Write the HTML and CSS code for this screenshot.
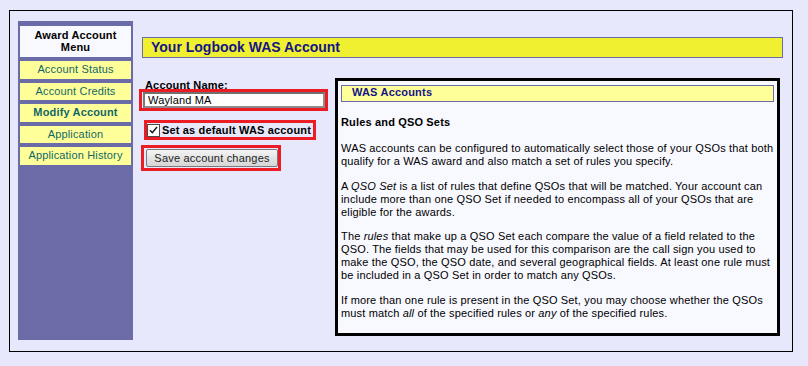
FILE: index.html
```html
<!DOCTYPE html>
<html>
<head>
<meta charset="utf-8">
<link rel="stylesheet" href="styles.css">
</head>
<body>
<div class="frame">
  <nav class="sidebar">
    <div class="menu-head">Award Account<br>Menu</div>
    <a class="menu-item">Account Status</a>
    <a class="menu-item">Account Credits</a>
    <a class="menu-item current">Modify Account</a>
    <a class="menu-item">Application</a>
    <a class="menu-item">Application History</a>
  </nav>
  <main class="main">
    <h1 class="title">Your Logbook WAS Account</h1>
    <div class="row">
      <form class="form">
        <label class="field-label">Account Name:</label>
        <div class="hl hl-input"><input class="text-input" type="text" value="Wayland MA"></div>
        <div class="hl hl-check">
          <svg class="checkbox" width="13" height="13" viewBox="0 0 13 13"><rect x="0.5" y="0.5" width="12" height="12" fill="#fff" stroke="#4a4a4a"/><path d="M3 6.3 L5.3 8.8 L10 3" fill="none" stroke="#111" stroke-width="1.4"/></svg>
          <span class="check-label">Set as default WAS account</span>
        </div>
        <div class="hl hl-button"><button class="btn" type="button">Save account changes</button></div>
      </form>
      <section class="info">
        <div class="info-head">WAS Accounts</div>
        <h2 class="info-title">Rules and QSO Sets</h2>
        <p>WAS accounts can be configured to automatically select those of your QSOs that both<br>qualify for a WAS award and also match a set of rules you specify.</p>
        <p>A <i>QSO Set</i> is a list of rules that define QSOs that will be matched. Your account can<br>include more than one QSO Set if needed to encompass all of your QSOs that are<br>eligible for the awards.</p>
        <p>The <i>rules</i> that make up a QSO Set each compare the value of a field related to the<br>QSO. The fields that may be used for this comparison are the call sign you used to<br>make the QSO, the QSO date, and several geographical fields. At least one rule must<br>be included in a QSO Set in order to match any QSOs.</p>
        <p>If more than one rule is present in the QSO Set, you may choose whether the QSOs<br>must match <i>all</i> of the specified rules or <i>any</i> of the specified rules.</p>
      </section>
    </div>
  </main>
</div>
</body>
</html>
```
FILE: styles.css
```css
html, body {
  background: #e8e8fc;
}
body {
  margin: 10px 0 0 9px;
  font-family: "Liberation Sans", Arial, sans-serif;
  font-size: 11px;
  letter-spacing: 0.16px;
  color: #000;
}
.frame {
  width: 784px;
  box-sizing: border-box;
  border: 1px solid #000;
  padding: 10px 9px 11px 8px;
  display: flex;
  align-items: stretch;
}
.sidebar {
  width: 115px;
  flex: 0 0 115px;
  box-sizing: border-box;
  background: #6b6ba7;
  padding: 5px 2px 0;
  display: flex;
  flex-direction: column;
}
.menu-head {
  background: #f8f8ff;
  font-weight: bold;
  text-align: center;
  line-height: 12px;
  padding: 3px 0 4px;
  height: 24px;
}
.menu-item {
  display: block;
  margin-top: 4px;
  height: 17.5px;
  line-height: 16px;
  background: #ffff99;
  color: #116767;
  text-align: center;
}
.menu-item.current {
  font-weight: bold;
}
.main {
  flex: 1;
  margin-left: 6px;
  display: flex;
  flex-direction: column;
}
.title {
  margin: 16px 0 0 3px;
  height: 21px;
  box-sizing: border-box;
  border: 1px solid #6b6ba7;
  background: #f0f030;
  color: #15158a;
  font-size: 14px;
  letter-spacing: 0;
  line-height: 19px;
  padding-left: 8px;
}
.row {
  display: flex;
  margin-top: 20px;
}
.form {
  flex: 0 0 196px;
  margin: 0;
}
.field-label {
  display: block;
  font-weight: bold;
  line-height: 10px;
  margin: 2px 0 0 6px;
}
.hl {
  border: 3px solid #ec1c24;
}
.hl-input {
  width: 189px;
  height: 22px;
  box-sizing: border-box;
  margin-top: -1px;
  padding: 0 0 0 1px;
}
.text-input {
  display: block;
  width: 182px;
  height: 16px;
  box-sizing: border-box;
  margin: 0;
  border: 2px solid #8c8c8c;
  border-top-color: #707070;
  border-left-color: #7a7a7a;
  padding: 0 0 0 3px;
  font-family: "Liberation Sans", Arial, sans-serif;
  font-size: 11px;
  letter-spacing: 0.16px;
  line-height: 12px;
  background: #fff;
  color: #000;
  outline: none;
}
.hl-check {
  display: flex;
  align-items: center;
  width: fit-content;
  height: 20px;
  box-sizing: border-box;
  margin: 9px 0 0 5px;
  padding-right: 2px;
}
.checkbox {
  display: block;
  flex: 0 0 13px;
}
.check-label {
  font-weight: bold;
  margin-left: 2px;
  line-height: 14px;
}
.hl-button {
  width: 140px;
  height: 26px;
  box-sizing: border-box;
  margin: 5px 0 0 2px;
  padding: 1px;
}
.btn {
  display: block;
  width: 132px;
  height: 18px;
  margin: 0 0 0 1px;
  padding: 0;
  border: 1px solid #7a7a7a;
  border-radius: 2px;
  background: linear-gradient(#f4f4f4, #e4e4e4 50%, #d6d6d6);
  font-family: "Liberation Sans", Arial, sans-serif;
  font-size: 11px;
  letter-spacing: 0.2px;
  color: #222;
  line-height: 16px;
}
.info {
  width: 445px;
  box-sizing: border-box;
  border: 3px solid #000;
  background: #f8f8ff;
  padding: 4px 3px 13px;
  margin-bottom: 4px;
}
.info-head {
  border: 1px solid #6b6ba7;
  background: #ffff99;
  color: #15158a;
  font-weight: bold;
  line-height: 13px;
  padding: 0 0 2px 10px;
  letter-spacing: 0.2px;
}
.info-title {
  font-size: 11px;
  font-weight: bold;
  line-height: 13px;
  margin: 14px 0 13px;
}
.info p {
  margin: 0 0 11.5px;
  line-height: 13px;
  white-space: nowrap;
}
.info p:last-child {
  margin-bottom: 0;
}
```
